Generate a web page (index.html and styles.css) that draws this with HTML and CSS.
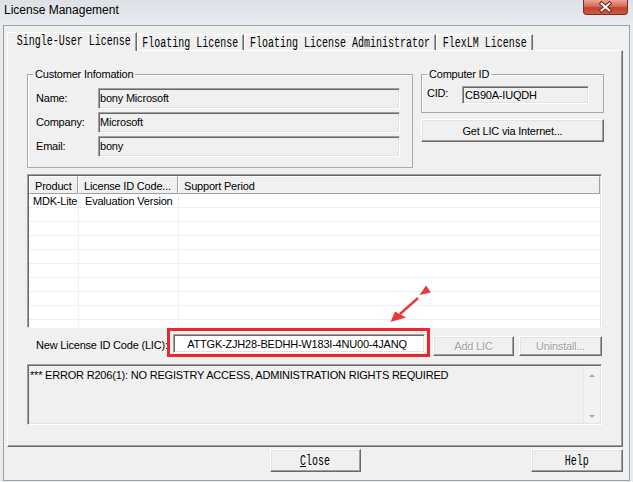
FILE: index.html
```html
<!DOCTYPE html>
<html lang="en">

<head>
    <meta charset="UTF-8">
    <meta name="viewport" content="width=device-width, initial-scale=1.0">
    <title>License Management</title>

    <link rel="stylesheet" href="styles.css">
</head>

<body>
    <div class="titlebar">
        <span class="title">License Management</span>
        <span class="close-btn">
            <svg width="44" height="15" viewBox="0 0 44 15">
                <path d="M18 3.5 L26 10.5 M26 3.5 L18 10.5" stroke="#6b2219" stroke-width="4" stroke-linecap="square" fill="none" />
                <path d="M18 3.5 L26 10.5 M26 3.5 L18 10.5" stroke="#fff" stroke-width="2" stroke-linecap="square" fill="none" />
            </svg>
        </span>
    </div>

    <div class="client">
        <div class="tabs">
            <div class="tab active"><span class="mono">Single-User License</span></div>
            <div class="tab floating"><span class="mono">Floating License</span></div>
            <div class="tab admin"><span class="mono">Floating License Administrator</span></div>
            <div class="tab flexlm"><span class="mono">FlexLM License</span></div>
        </div>

        <div class="panel">
            <div class="top-row">
                <fieldset class="group customer">
                    <legend>Customer Infomation</legend>
                    <div class="field"><label>Name:</label><div class="edit">bony Microsoft</div></div>
                    <div class="field"><label>Company:</label><div class="edit">Microsoft</div></div>
                    <div class="field"><label>Email:</label><div class="edit">bony</div></div>
                </fieldset>

                <div class="right-col">
                    <fieldset class="group computer">
                        <legend>Computer ID</legend>
                        <div class="field cid-field"><label>CID:</label><div class="edit cid">CB90A-IUQDH</div></div>
                    </fieldset>
                    <div class="btn get-lic">Get LIC via Internet...</div>
                </div>
            </div>

            <div class="listview">
                <div class="lv-head">
                    <div class="lv-col col-product">Product</div>
                    <div class="lv-col col-code">License ID Code...</div>
                    <div class="lv-col col-period">Support Period</div>
                </div>
                <div class="lv-body">
                    <div class="lv-row">
                        <div class="lv-cell col-product">MDK-Lite</div>
                        <div class="lv-cell col-code">Evaluation Version</div>
                        <div class="lv-cell col-period"></div>
                    </div>
                </div>
            </div>

            <div class="lic-row">
                <label class="lic-label">New License ID Code (LIC):</label>
                <div class="highlight"><div class="edit lic">ATTGK-ZJH28-BEDHH-W183I-4NU00-4JANQ</div></div>
                <div class="btn disabled add-lic">Add LIC</div>
                <div class="btn disabled uninstall">Uninstall...</div>
            </div>

            <div class="log">
                <div class="log-text">*** ERROR R206(1): NO REGISTRY ACCESS, ADMINISTRATION RIGHTS REQUIRED</div>
                <div class="scrollbar">
                    <span class="arrow-up"></span>
                    <span class="arrow-down"></span>
                </div>
            </div>
        </div>

        <div class="footer">
            <div class="btn footer-btn"><span class="mono"><u>C</u>lose</span></div>
            <div class="btn footer-btn help"><span class="mono">Help</span></div>
        </div>
    </div>

    <!-- red annotation arrow drawn over the dialog -->
    <svg class="annotation" width="50" height="46" viewBox="0 0 50 46">
        <polygon points="41,5.5 46,12.5 34.5,15" fill="#e8393b" />
        <line x1="33" y1="18" x2="15" y2="34" stroke="#e8393b" stroke-width="2.4" />
        <polygon points="5.5,42 10,31.5 21,37.5" fill="#e8393b" />
    </svg>
</body>

</html>
```

FILE: styles.css
```css
* {
    box-sizing: border-box;
}

body {
    margin: 0;
    width: 633px;
    height: 482px;
    overflow: hidden;
    position: relative;
    background: #e9ecef;
    font-family: "Liberation Sans", Arial, sans-serif;
    font-size: 11px;
    letter-spacing: -0.2px;
    color: #000;
}

.titlebar {
    height: 25px;
    display: flex;
    align-items: flex-start;
    padding-left: 4px;
    background: linear-gradient(#dde1e6, #e9ecef);
}

.title {
    font-size: 12px;
    letter-spacing: 0;
    line-height: 20px;
}

.close-btn {
    margin-left: auto;
    margin-right: 5px;
    width: 45px;
    height: 15px;
    border: 1px solid #7d2a1f;
    border-top: none;
    border-radius: 0 0 4px 4px;
    background: linear-gradient(#eba497, #d66a55 45%, #c2412e 55%, #cd5a43);
    display: flex;
}

.client {
    margin-left: 3px;
    width: 627px;
    height: 456px;
    border: 1px solid #a0a0a0;
    background: #f0f0f0;
    padding: 6px 6px 0 3px;
}

/* tabs */
.tabs {
    display: flex;
    align-items: flex-end;
    height: 19px;
    margin-bottom: -1px;
    position: relative;
    z-index: 1;
}

.tab {
    display: flex;
    justify-content: center;
    height: 16px;
    margin-bottom: 1px;
    background: #f0f0f0;
    border: 1px solid;
    border-color: #fff #696969 #f0f0f0 #fff;
    border-bottom: none;
    box-shadow: inset -1px 0 #a0a0a0;
    white-space: nowrap;
}

.tab.active {
    width: 130px;
    height: 19px;
    margin-bottom: 0;
    padding-left: 3px;
}

.tab.floating {
    width: 107px;
}

.tab.admin {
    width: 192px;
}

.tab.flexlm {
    width: 97px;
}

.mono {
    display: inline-block;
    font-family: "Liberation Mono", "Courier New", monospace;
    font-size: 14px;
    line-height: 16px;
    letter-spacing: 0;
    transform: scaleX(0.714);
    white-space: nowrap;
}

.panel {
    height: 397px;
    border: 1px solid;
    border-color: #fff #696969 #696969 #fff;
    box-shadow: inset -1px -1px #a0a0a0;
    padding: 16px 0 0 19px;
}

/* group boxes */
.top-row {
    display: flex;
    align-items: flex-start;
    gap: 8px;
}

.group {
    margin: 0;
    min-width: 0;
    border: 1px solid #a9a9a9;
    box-shadow: 1px 1px 0 #fff inset;
}

.group legend {
    padding: 0 2px;
    line-height: 14px;
}

.customer {
    width: 386px;
    height: 101px;
    padding: 7px 11px 0 8px;
}

.customer legend {
    margin-left: -3px;
}

.computer {
    width: 183px;
    height: 46px;
    padding: 5px 0 0 5px;
}

.computer legend {
    margin-left: 0;
}

.field {
    display: flex;
    align-items: flex-start;
    height: 21px;
    margin-bottom: 3px;
}

.field label {
    width: 62px;
    line-height: 14px;
    padding-top: 3px;
}

.edit {
    border: 1px solid;
    border-color: #a0a0a0 #fff #fff #a0a0a0;
    box-shadow: inset 1px 1px #696969, inset -1px -1px #e3e3e3;
    background: #f0f0f0;
    line-height: 14px;
    white-space: nowrap;
}

.field .edit {
    width: 302px;
    height: 21px;
    padding: 2px 0 0 1px;
}

.cid-field label {
    width: 35px;
    padding-top: 0;
}

.field .cid {
    width: 127px;
    height: 18px;
    padding: 1px 0 0 2px;
}

/* buttons */
.btn {
    display: flex;
    align-items: center;
    justify-content: center;
    height: 23px;
    border: 1px solid;
    border-color: #fff #696969 #696969 #fff;
    box-shadow: inset -1px -1px #a0a0a0, inset 1px 1px #e3e3e3;
    background: #f0f0f0;
    white-space: nowrap;
}

.get-lic {
    width: 183px;
    margin-top: 6px;
}

.btn.disabled {
    color: #a0a0a0;
    text-shadow: 1px 1px #fff;
    height: 20px;
    margin-top: 8px;
}

.add-lic {
    width: 81px;
    margin-left: 3px;
}

.uninstall {
    width: 83px;
    margin-left: 5px;
}

/* list view */
.listview {
    width: 575px;
    height: 154px;
    margin-top: 6px;
    border: 1px solid;
    border-color: #a0a0a0 #fff #fff #a0a0a0;
    box-shadow: inset 1px 1px #696969, inset -1px -1px #e3e3e3;
    background: #fff;
    padding: 1px;
    overflow: hidden;
}

.lv-head {
    display: flex;
    height: 18px;
}

.lv-col {
    height: 18px;
    line-height: 14px;
    padding: 2px 0 0 5px;
    background: #f0f0f0;
    border: 1px solid;
    border-color: #fff #a0a0a0 #a0a0a0 #fff;
    white-space: nowrap;
}

.col-product {
    width: 49px;
}

.col-code {
    width: 100px;
}

.col-period {
    flex: 1;
}

.lv-body {
    height: 133px;
    background:
        linear-gradient(to right, transparent 49px, #f0f0f0 49px 50px, transparent 50px 149px, #f0f0f0 149px 150px, transparent 150px),
        repeating-linear-gradient(to bottom, transparent 0 13px, #f0f0f0 13px 14px),
        #fff;
}

.lv-row {
    display: flex;
    height: 14px;
}

.lv-cell {
    line-height: 14px;
    padding-left: 7px;
    white-space: nowrap;
}

.lv-cell.col-product {
    padding-left: 4px;
}

/* new licence row */
.lic-row {
    display: flex;
    align-items: flex-start;
    padding-left: 9px;
}

.lic-label {
    width: 131px;
    line-height: 14px;
    padding-top: 10px;
    white-space: nowrap;
}

.highlight {
    width: 263px;
    height: 29px;
    border: 3px solid #e8282c;
    padding: 3px 2px 1px 3px;
}

.edit.lic {
    height: 19px;
    background: #fff;
    text-align: center;
    padding-top: 2px;
    padding-right: 4px;
}

/* message box */
.log {
    display: flex;
    width: 575px;
    height: 61px;
    margin-top: 7px;
    border: 1px solid;
    border-color: #a0a0a0 #fff #fff #a0a0a0;
    box-shadow: inset 1px 1px #696969, inset -1px -1px #e3e3e3;
    background: #f0f0f0;
    padding: 1px;
}

.log-text {
    flex: 1;
    line-height: 14px;
    padding: 2px 0 0 1px;
    white-space: nowrap;
}

.scrollbar {
    width: 17px;
    display: flex;
    flex-direction: column;
    justify-content: space-between;
    align-items: center;
    padding: 8px 0 5px;
    background: #f2f2f2;
    border-left: 1px solid #e8e8e8;
}

.arrow-up {
    width: 0;
    height: 0;
    border-left: 3px solid transparent;
    border-right: 3px solid transparent;
    border-bottom: 3px solid #a8a8a8;
}

.arrow-down {
    width: 0;
    height: 0;
    border-left: 3px solid transparent;
    border-right: 3px solid transparent;
    border-top: 3px solid #a8a8a8;
}

/* bottom buttons */
.footer {
    display: flex;
    margin-top: 2px;
    padding-left: 263px;
}

.footer-btn {
    width: 91px;
}

.footer-btn.help {
    width: 92px;
    margin-left: auto;
}

.annotation {
    position: absolute;
    left: 385px;
    top: 280px;
}
```
